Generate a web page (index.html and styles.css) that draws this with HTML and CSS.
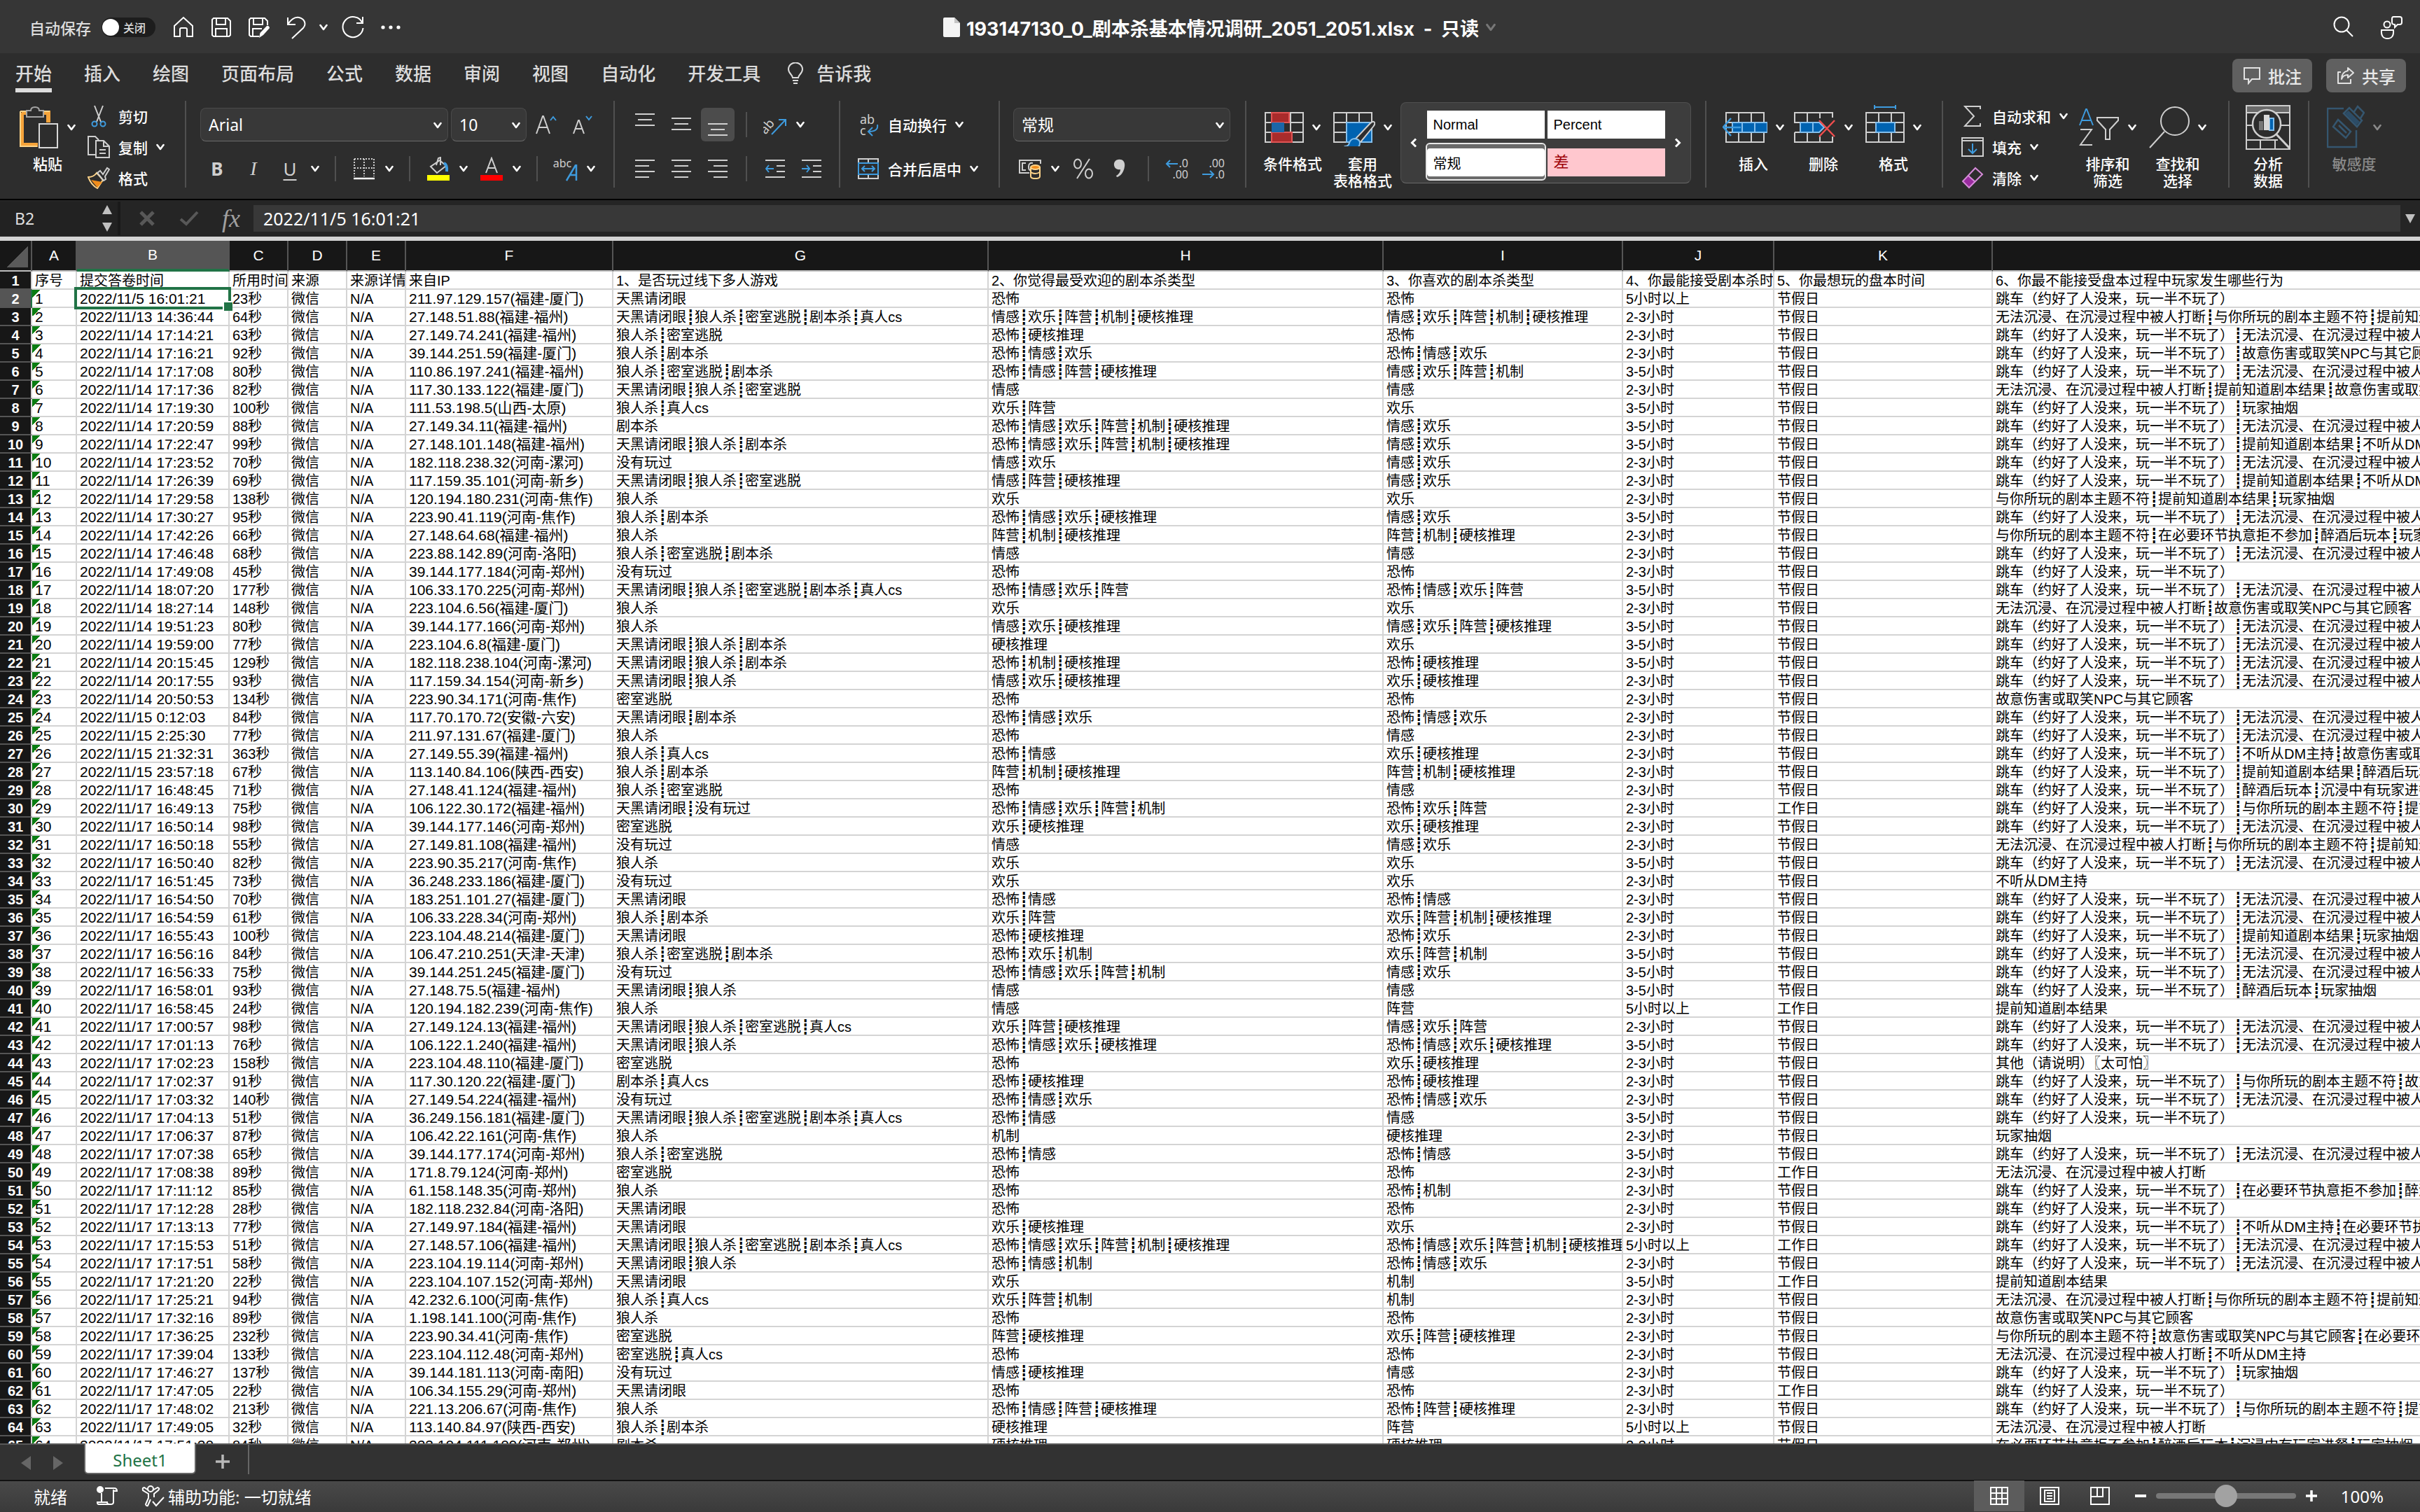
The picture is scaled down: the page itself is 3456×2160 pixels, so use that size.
FILE: index.html
```html
<!DOCTYPE html>
<html lang="zh-CN">
<head>
<meta charset="utf-8">
<title>193147130_0_剧本杀基本情况调研_2051_2051.xlsx</title>
<link rel="stylesheet" href="styles.css">
</head>
<body>
<svg class="sprite" aria-hidden="true">
  <symbol id="chev" viewBox="0 0 12 10"><path d="M1.5 2 6 8 10.500 2" fill="none" stroke="currentColor" stroke-width="2.6" stroke-linecap="round" stroke-linejoin="round"/></symbol>
  <symbol id="grid" viewBox="0 0 56 44"><path d="M1 1h54v42H1zM1 15h54M1 29h54M19 1v42M37 1v42" fill="none" stroke="#cfcfcf" stroke-width="2"/></symbol>
</svg>

<header class="titlebar">
  <div class="quick">
    <label class="autosave">自动保存 <span class="toggle"><input type="checkbox"><span>关闭</span></span></label>
    <button class="qb" aria-label="主页"><svg width="32" height="32" viewBox="0 0 32 32"><path d="M3 14 16 2l13 12v15h-8V19q0-2-2-2h-6q-2 0-2 2v10H3z" class="w"/></svg></button>
    <button class="qb" aria-label="保存"><svg width="32" height="32" viewBox="0 0 32 32"><path d="M5 3h20l4 4v20l-2 2H5l-2-2V5zM9 3v9h13V3M8 29V18h16v11" class="w"/></svg></button>
    <button class="qb" aria-label="另存为"><svg width="32" height="32" viewBox="0 0 32 32"><path d="M16 29H4l-2-2V5l2-2h20l4 4v6M8 3v9h13V3M7 29V18h13" class="w"/><path d="M16 31l1.500-7L27 14q3-1 4 3l-9 10z" fill="#fff"/></svg></button>
    <button class="qb" aria-label="撤销"><svg width="32" height="34" viewBox="0 0 32 34"><path d="M3 3v10h11M3 13C8 5 13 2 19 3c8 2 11 9 6 15L9 33" class="w"/></svg></button>
    <button class="qc" aria-label="撤销选项"><svg width="12" height="10"><use href="#chev"/></svg></button>
    <button class="qb" aria-label="重做"><svg width="34" height="34" viewBox="0 0 34 34"><path d="M31 2v9h-9M30 10A14.500 14.500 0 1 0 31.500 18" class="w"/></svg></button>
    <button class="qb" aria-label="更多"><svg width="28" height="8" viewBox="0 0 28 8"><circle cx="3" cy="4" r="2.600"/><circle cx="14" cy="4" r="2.600"/><circle cx="25" cy="4" r="2.600"/></svg></button>
  </div>
  <h1 class="doc"><svg width="24" height="28" viewBox="0 0 24 28"><path d="M2 0h14l8 8v18q0 2-2 2H2q-2 0-2-2V2q0-2 2-2z" fill="#f4f4f4"/><path d="M16 0v8h8z" fill="#c4c4c4"/></svg><span class="doc-name">193147130_0_剧本杀基本情况调研_2051_2051.xlsx&nbsp; - &nbsp;只读</span><svg class="dim" width="16" height="12"><use href="#chev"/></svg></h1>
  <div class="account">
    <button class="qb" aria-label="搜索"><svg width="32" height="32" viewBox="0 0 32 32"><circle cx="13" cy="12" r="10.500" class="w"/><path d="M20 20l9 9" class="w"/></svg></button>
    <button class="qb" aria-label="状态"><svg width="34" height="34" viewBox="0 0 34 34"><circle cx="11" cy="13" r="4.500" class="w"/><path d="M3 21h17q1 12-8.500 12T3 21zM20 2h9q3 0 3 3v5q0 3-3 3h-3l-4 4v-4q-4 0-4-3V5q0-3 2-3z" class="w"/></svg></button>
  </div>
</header>

<nav class="tabs">
  <a href="#home" class="tab current">开始</a><a href="#insert" class="tab">插入</a><a href="#draw" class="tab">绘图</a><a href="#layout" class="tab">页面布局</a><a href="#formulas" class="tab">公式</a><a href="#data" class="tab">数据</a><a href="#review" class="tab">审阅</a><a href="#view" class="tab">视图</a><a href="#automate" class="tab">自动化</a><a href="#developer" class="tab">开发工具</a>
  <a href="#tell" class="tell"><svg width="24" height="32" viewBox="0 0 24 32"><path d="M8 22c0-4-6-6-6-12a10 9.500 0 0 1 20 0c0 6-6 8-6 12zM8 26h8M9 30h6" fill="none" stroke="#dcdcdc" stroke-width="2"/></svg>告诉我</a>
  <div class="actions">
    <button class="pill"><svg width="26" height="26" viewBox="0 0 26 26"><path d="M2 2h22v16H13l-5 6v-6H2z" fill="none" stroke="#e2e2e2" stroke-width="2"/></svg>批注</button>
    <button class="pill"><svg width="26" height="26" viewBox="0 0 26 26"><path d="M6 8H2v16h18v-6M16 2l8 7-8 7v-4q-7 0-9 6 0-10 9-12z" fill="none" stroke="#e2e2e2" stroke-width="2" stroke-linejoin="round"/></svg>共享</button>
  </div>
</nav>

<section class="ribbon" id="home">
  <div class="group g-clip">
    <button class="big"><span class="pic"><svg width="56" height="60" viewBox="0 0 56 60"><path d="M3 9h38v14M26 55H3V9" fill="none" stroke="#f5a33a" stroke-width="6"/><path d="M1 7h42M1 7v50h24" fill="none" stroke="#ffd58a" stroke-width="2"/><path d="M10 6h6q0-5 6-5t6 5h6v9H10z" fill="#2d2d2d" stroke="#a5a5a5" stroke-width="2"/><path d="M28 25h26v34H28z" fill="#2d2d2d" stroke="#d8d8d8" stroke-width="2"/></svg><svg width="12" height="10"><use href="#chev"/></svg></span><span class="cap">粘贴</span></button>
    <div class="stack">
      <button class="line"><span class="ico"><svg width="24" height="32" viewBox="0 0 24 32"><path d="M6 1l9 23M18 1L9 24" class="g"/><circle cx="6" cy="27" r="3.500" class="b"/><circle cx="18" cy="27" r="3.500" class="b"/></svg></span>剪切</button>
      <button class="line"><span class="ico"><svg width="32" height="32" viewBox="0 0 32 32"><path d="M11 27H1V1h10l5 5M12 7h11l8 8v16H12zM23 7v8h8M17 20h9M17 25h9" class="g"/></svg></span>复制<svg width="12" height="10"><use href="#chev"/></svg></button>
      <button class="line"><span class="ico"><svg width="32" height="32" viewBox="0 0 32 32"><path d="M1 15q8 0 12-6l9 10-8 12q-9-5-13-16z" fill="#2d2d2d" stroke="#ffd58a" stroke-width="2"/><path d="M5 19l16 3-7 8z" fill="#f08c1a"/><path d="M14 9l4-3 4 5 6-9 3 2-6 10 1 4-3 2z" fill="#2d2d2d" stroke="#cfcfcf" stroke-width="2"/></svg></span>格式</button>
    </div>
  </div>

  <div class="group g-font rows">
    <div class="row">
      <span class="sel sel-font"><select aria-label="字体"><option>Arial</option></select><svg width="12" height="10"><use href="#chev"/></svg></span>
      <span class="sel sel-size"><select aria-label="字号"><option>10</option></select><svg width="12" height="10"><use href="#chev"/></svg></span>
      <button class="ib" aria-label="增大字号"><svg width="30" height="30" viewBox="0 0 30 30"><path d="M1 28 10 3h1l9 25M4 19h13" class="g"/><path d="M21 9l4-5 4 5" class="b"/></svg></button>
      <button class="ib" aria-label="减小字号"><svg width="30" height="30" viewBox="0 0 30 30"><path d="M2 28 9 9h1l7 19M4 21h11" class="g"/><path d="M20 3l4 5 4-5" class="b"/></svg></button>
    </div>
    <div class="row">
      <button class="ib t-b">B</button>
      <button class="ib t-i">I</button>
      <button class="split"><span class="ib t-u">U</span><svg width="12" height="10"><use href="#chev"/></svg></button>
      <i class="vs"></i>
      <button class="split" aria-label="边框"><span class="ib"><svg width="32" height="32" viewBox="0 0 32 32"><path d="M2 2h28M2 15h28M2 2v25M16 2v25M30 2v25" fill="none" stroke="#cfcfcf" stroke-width="2" stroke-dasharray="2 2"/><path d="M1 30h30" stroke="#fff" stroke-width="2.500"/></svg></span><svg width="12" height="10"><use href="#chev"/></svg></button>
      <i class="vs"></i>
      <button class="split" aria-label="填充颜色"><span class="ib"><svg width="32" height="34" viewBox="0 0 32 34"><path d="M18 5 5 14l9 9 13-10zM13 12l3-10 3-1v11" class="g"/><path d="M24 9q5 2 4 12" fill="none" stroke="#3e9bde" stroke-width="4"/><path d="M0 26h32v8H0z" fill="#ff0"/></svg></span><svg width="12" height="10"><use href="#chev"/></svg></button>
      <button class="split" aria-label="字体颜色"><span class="ib"><svg width="32" height="34" viewBox="0 0 32 34"><path d="M8 23 16 2l8 21M11 16h10" class="g"/><path d="M0 26h32v8H0z" fill="red"/></svg></span><svg width="12" height="10"><use href="#chev"/></svg></button>
      <i class="vs"></i>
      <button class="split" aria-label="拼音"><span class="ib abc"><span>abc</span><svg width="18" height="24" viewBox="0 0 18 24"><path d="M1 23 14 1h1v22M6 15h9" fill="none" stroke="#3e9bde" stroke-width="2.500"/></svg></span><svg width="12" height="10"><use href="#chev"/></svg></button>
    </div>
  </div>

  <div class="group g-align rows">
    <div class="row">
      <button class="ib" aria-label="顶端对齐"><svg width="28" height="32" viewBox="0 0 28 32"><path d="M0 1h28M4 9h20M0 17h28" class="g"/></svg></button>
      <button class="ib" aria-label="垂直居中"><svg width="28" height="32" viewBox="0 0 28 32"><path d="M0 7h28M4 15h20M0 23h28" class="g"/></svg></button>
      <button class="ib on" aria-label="底端对齐"><svg width="28" height="32" viewBox="0 0 28 32"><path d="M0 15h28M4 23h20M0 31h28" class="g"/></svg></button>
      <i class="vs"></i>
      <button class="split" aria-label="方向"><span class="ib"><svg width="34" height="34" viewBox="0 0 34 34"><text x="-4" y="24" transform="rotate(-50 8 20)" class="ab">ab</text><path d="M12 31 31 11M22 10h10v9" class="b"/></svg></span><svg width="12" height="10"><use href="#chev"/></svg></button>
    </div>
    <div class="row">
      <button class="ib" aria-label="左对齐"><svg width="28" height="28" viewBox="0 0 28 28"><path d="M0 2h28M0 10h20M0 18h28M0 26h20" class="g"/></svg></button>
      <button class="ib" aria-label="居中"><svg width="28" height="28" viewBox="0 0 28 28"><path d="M0 2h28M4 10h20M0 18h28M4 26h20" class="g"/></svg></button>
      <button class="ib" aria-label="右对齐"><svg width="28" height="28" viewBox="0 0 28 28"><path d="M0 2h28M8 10h20M0 18h28M8 26h20" class="g"/></svg></button>
      <i class="vs"></i>
      <button class="ib" aria-label="减少缩进"><svg width="28" height="28" viewBox="0 0 28 28"><path d="M0 2h28M16 10h12M16 18h12M0 26h28" class="g"/><path d="M12 14H1M5 9l-4 5 4 5" class="b"/></svg></button>
      <button class="ib" aria-label="增加缩进"><svg width="28" height="28" viewBox="0 0 28 28"><path d="M0 2h28M16 10h12M16 18h12M0 26h28" class="g"/><path d="M0 14h11M7 9l4 5-4 5" class="b"/></svg></button>
    </div>
  </div>

  <div class="group g-wrap rows">
    <div class="row"><button class="line"><span class="ico"><svg width="32" height="36" viewBox="0 0 32 36"><text x="4" y="17" class="ab">ab</text><text x="4" y="33" class="ab">c</text><path d="M29 18q2 10-13 10M22 22l-6 6 6 6" class="b"/></svg></span>自动换行<svg width="12" height="10"><use href="#chev"/></svg></button></div>
    <div class="row"><button class="line"><span class="ico"><svg width="30" height="30" viewBox="0 0 30 30"><path d="M1 1h28v28H1zM15 1v6M15 23v6" class="g"/><path d="M1 7h28v16H1zM6 15h18M10 11l-4 4 4 4M20 11l4 4-4 4" class="b"/></svg></span>合并后居中<svg width="12" height="10"><use href="#chev"/></svg></button></div>
  </div>

  <div class="group g-num rows">
    <div class="row"><span class="sel sel-num"><select aria-label="数字格式"><option>常规</option></select><svg width="12" height="10"><use href="#chev"/></svg></span></div>
    <div class="row">
      <button class="split" aria-label="货币"><span class="ib"><svg width="32" height="30" viewBox="0 0 32 30"><path d="M31 8V3H1v18h14" class="g"/><path d="M10 7H5v10h5M20 7q-6-1-6 5t3 5" class="g"/><path d="M17 13v13q0 3 6.500 3T30 26V13z" fill="#2d2d2d" stroke="#ffd58a" stroke-width="2"/><ellipse cx="23.500" cy="13" rx="6.500" ry="3" fill="#f08c1a" stroke="#ffd58a" stroke-width="2"/><path d="M17 20q6 4 13 0" fill="none" stroke="#ffd58a" stroke-width="2"/></svg></span><svg width="12" height="10"><use href="#chev"/></svg></button>
      <button class="ib" aria-label="百分比"><svg width="30" height="30" viewBox="0 0 30 30"><ellipse cx="7" cy="8" rx="5" ry="6.500" class="g"/><ellipse cx="23" cy="22" rx="5" ry="6.500" class="g"/><path d="M24 1 6 29" class="g"/></svg></button>
      <button class="ib" aria-label="千位分隔"><svg width="18" height="28" viewBox="0 0 18 28"><path d="M7 1c7-1 10 4 9 10-1 8-6 14-11 15l-1-2c4-2 6-6 6-9C-1 17-2 2 7 1z" fill="#cfcfcf"/></svg></button>
      <i class="vs"></i>
      <button class="ib" aria-label="增加小数位"><svg width="34" height="34" viewBox="0 0 34 34"><text x="33" y="15" class="num">.0</text><text x="33" y="31" class="num">.00</text><path d="M18 10H2M7 5l-5 5 5 5" class="b"/></svg></button>
      <button class="ib" aria-label="减少小数位"><svg width="34" height="34" viewBox="0 0 34 34"><text x="33" y="15" class="num">.00</text><text x="33" y="31" class="num">.0</text><path d="M1 25h16M12 20l5 5-5 5" class="b"/></svg></button>
    </div>
  </div>

  <div class="group g-style">
    <button class="big"><span class="pic"><svg width="56" height="44" viewBox="0 0 56 44"><use href="#grid"/><path d="M10 1h25v14H10zM10 29h29v14H10z" fill="#a92b2b" stroke="#e05555" stroke-width="2"/><path d="M10 15h18v14H10z" fill="#1b66a8"/></svg><svg width="12" height="10"><use href="#chev"/></svg></span><span class="cap">条件格式</span></button>
    <button class="big"><span class="pic"><svg width="60" height="54" viewBox="0 -5 60 54"><use href="#grid" width="56" height="44"/><path d="M19 15h36v28H19z" fill="#0063b1" stroke="#83beec" stroke-width="2"/><path d="M58 14q3 2-1 7L39 43l-7-5 20-21q4-4 6-3z" fill="#2d2d2d" stroke="#cfcfcf" stroke-width="2"/><path d="M31 38q7 1 7 6 0 9-12 9-7 0-9-4 5 0 6-5 2-6 8-6z" fill="#0063b1" stroke="#83beec" stroke-width="2"/></svg><svg width="12" height="10"><use href="#chev"/></svg></span><span class="cap">套用<br>表格格式</span></button>
    <div class="gallery">
      <button class="ga" aria-label="上一个"><svg width="10" height="14" viewBox="0 0 10 14"><path d="M8 1.500 2.500 7 8 12.500" class="gw"/></svg></button>
      <div class="styles">
        <button class="st">Normal</button><button class="st">Percent</button>
        <button class="st song picked">常规</button><button class="st song bad">差</button>
      </div>
      <button class="ga" aria-label="下一个"><svg width="10" height="14" viewBox="0 0 10 14"><path d="M2 1.500 7.500 7 2 12.500" class="gw"/></svg></button>
    </div>
  </div>

  <div class="group g-cells">
    <button class="big"><span class="pic"><svg width="64" height="44" viewBox="-4 0 64 44"><use href="#grid" width="56" height="44"/><path d="M10 15h50v14H10z" fill="#0063b1" stroke="#83beec" stroke-width="2"/><path d="M24 15v14M42 15v14" stroke="#83beec" stroke-width="2"/><path d="M22 22H-2M8 9-3 21.500 8 34" fill="none" stroke="#3e9bde" stroke-width="2.500"/></svg><svg width="12" height="10"><use href="#chev"/></svg></span><span class="cap">插入</span></button>
    <button class="big"><span class="pic"><svg width="60" height="44" viewBox="0 0 60 44"><path d="M55 8V1H1v14h10M1 29v14h54v-8M1 29h10M19 1v42M37 1v8M37 35v8" class="g"/><path d="M9 15h27l7 7-7 7H9z" fill="#0063b1" stroke="#83beec" stroke-width="2"/><path d="M27 15v14" stroke="#83beec" stroke-width="2"/><path d="M36 12l22 23M58 12 36 35" fill="none" stroke="#f04e4e" stroke-width="2.500"/></svg><svg width="12" height="10"><use href="#chev"/></svg></span><span class="cap">删除</span></button>
    <button class="big"><span class="pic"><svg width="56" height="64" viewBox="0 -10 56 64"><use href="#grid" width="56" height="44"/><path d="M15 15h27v14H15z" fill="#0063b1" stroke="#83beec" stroke-width="2"/><path d="M13-10v6M43-10v6M13-7h30" class="b"/></svg><svg width="12" height="10"><use href="#chev"/></svg></span><span class="cap">格式</span></button>
  </div>

  <div class="group g-edit">
    <div class="stack">
      <button class="line"><span class="ico"><svg width="26" height="30" viewBox="0 0 26 30"><path d="M24 5V1H2l13 14L2 29h22v-4" class="g"/></svg></span>自动求和<svg width="12" height="10"><use href="#chev"/></svg></button>
      <button class="line"><span class="ico"><svg width="32" height="28" viewBox="0 0 32 28"><path d="M1 1h30v26H1zM1 5h30" class="g"/><path d="M16 9v14M10 17l6 6 6-6" class="b"/></svg></span>填充<svg width="12" height="10"><use href="#chev"/></svg></button>
      <button class="line"><span class="ico"><svg width="32" height="32" viewBox="0 0 32 32"><path d="M2 21l9-8 9 9-8 8z" fill="#9a2ba0"/><path d="M2 21 20 2l10 9-19 19z" fill="none" stroke="#d68ad9" stroke-width="2"/><path d="M10 13l10 9" stroke="#d68ad9" stroke-width="2"/></svg></span>清除<svg width="12" height="10"><use href="#chev"/></svg></button>
    </div>
    <button class="big"><span class="pic"><svg width="58" height="54" viewBox="0 0 58 54"><path d="M1 24 10 1h1l9 23M4 17h13" class="b"/><path d="M2 30h16L2 52h17" class="g"/><path d="M26 13h30v4L44 30v14h-6V30L26 17z" class="g"/></svg><svg width="12" height="10"><use href="#chev"/></svg></span><span class="cap">排序和<br>筛选</span></button>
    <button class="big"><span class="pic"><svg width="58" height="60" viewBox="0 0 58 60"><circle cx="37" cy="21" r="20" class="g"/><path d="M22 36 1 59" class="g"/></svg><svg width="12" height="10"><use href="#chev"/></svg></span><span class="cap">查找和<br>选择</span></button>
  </div>

  <div class="group g-analyze">
    <button class="big"><span class="pic"><svg width="64" height="64" viewBox="0 0 64 64"><path d="M1 1h62v62H1z" class="g"/><path d="M2 2h60v8H2z" fill="#6a6a6a"/><path d="M1 11h62M1 29h10M50 29h13M1 50h45M21 50v13M42 50v13" class="g"/><circle cx="30" cy="27" r="20" fill="#2d2d2d" stroke="#cfcfcf" stroke-width="2.500"/><path d="M44 42l19 20" stroke="#cfcfcf" stroke-width="3"/><path d="M19 23h6v13h-6z" fill="#777"/><path d="M34 19h6v17h-6z" fill="#0063b1" stroke="#83beec" stroke-width="2"/><path d="M26 14h8v22h-8z" fill="#d8d8d8"/></svg></span><span class="cap">分析<br>数据</span></button>
  </div>

  <div class="group g-sens">
    <button class="big faded" disabled><span class="pic"><svg width="54" height="64" viewBox="0 0 54 64"><path d="M24 5H1v55h41V36" fill="none" stroke="#35566f" stroke-width="2.500"/><path d="M16 21 34 38l-7 9L9 31zM17 29l11 11M24 12l8-8 18 18-7 9zM38 11l6-9 9 9-5 8" fill="none" stroke="#35566f" stroke-width="2.500"/><path d="M26 12l5-4 16 16-5 5z" fill="#2c4c66"/></svg><svg width="12" height="10"><use href="#chev"/></svg></span><span class="cap">敏感度</span></button>
  </div>
</section>

<section class="formula">
  <div class="namebox"><input type="text" aria-label="名称框" value="B2"><svg width="14" height="38" viewBox="0 0 14 38"><path d="M7 0l7 13H0zM7 38l7-13H0z" fill="#c0c0c0"/></svg></div>
  <div class="fbs">
    <button class="fb" aria-label="取消"><svg width="22" height="22" viewBox="0 0 22 22"><path d="M2 2l18 18M20 2 2 20" stroke="#585858" stroke-width="5"/></svg></button>
    <button class="fb" aria-label="输入"><svg width="28" height="22" viewBox="0 0 28 22"><path d="M2 12l8 7L26 2" fill="none" stroke="#585858" stroke-width="4"/></svg></button>
    <button class="fb fx">fx</button>
  </div>
  <input class="fin" type="text" aria-label="编辑栏" value="2022/11/5 16:01:21">
  <button class="fdrop" aria-label="展开编辑栏"><svg width="14" height="13" viewBox="0 0 14 13"><path d="M0 0h14L7 13z" fill="#c0c0c0"/></svg></button>
</section>

<main class="sheet">
  <table class="cells">
    <colgroup><col class="c-n"><col class="c-a"><col class="c-b"><col class="c-s"><col class="c-s"><col class="c-s"><col class="c-f"><col class="c-g"><col class="c-h"><col class="c-i"><col class="c-j"><col class="c-k"><col></colgroup>
    <thead>
      <tr><th class="corner" aria-label="全选"></th><th>A</th><th class="hot">B</th><th>C</th><th>D</th><th>E</th><th>F</th><th>G</th><th>H</th><th>I</th><th>J</th><th>K</th><th></th></tr>
    </thead>
    <tbody id="rows">
      <tr><th>1</th><td>序号</td><td>提交答卷时间</td><td>所用时间</td><td>来源</td><td>来源详情</td><td>来自IP</td><td>1、是否玩过线下多人游戏</td><td>2、你觉得最受欢迎的剧本杀类型</td><td>3、你喜欢的剧本杀类型</td><td>4、你最能接受剧本杀时长</td><td>5、你最想玩的盘本时间</td><td>6、你最不能接受盘本过程中玩家发生哪些行为</td></tr>
    </tbody>
  </table>
</main>

<footer class="bottom">
  <div class="sheets">
    <button class="sa" aria-label="上一张"><svg width="14" height="20" viewBox="0 0 14 20"><path d="M14 0v20L0 10z" fill="#666"/></svg></button>
    <button class="sa" aria-label="下一张"><svg width="14" height="20" viewBox="0 0 14 20"><path d="M0 0v20l14-10z" fill="#666"/></svg></button>
    <button class="sheet-tab">Sheet1</button>
    <button class="add" aria-label="新建工作表"><svg width="20" height="20" viewBox="0 0 20 20"><path d="M10 0v20M0 10h20" stroke="#b8b8b8" stroke-width="3.500"/></svg></button>
  </div>
  <div class="status">
    <span>就绪</span>
    <svg class="rec" width="30" height="28" viewBox="0 0 30 28"><circle cx="5" cy="5" r="5"/><path d="M7 10v13M12 3h13q4 0 4 4h-5M24 5v18q0 3-4 3H3q-2 0-2-3h14q0 3 4 3" class="w"/></svg>
    <button class="a11y"><svg width="34" height="32" viewBox="0 0 34 32"><circle cx="13" cy="6" r="4" class="w"/><path d="M10 8 4 4Q1 4 2 8l8 5v6L6 28q1 3 3 2l4-9M16 8l7-4q4 1 1 4l-6 5v5M16 24l5 6L32 18" class="w"/></svg>辅助功能: 一切就绪</button>
    <div class="views">
      <button class="vb on" aria-label="普通"><svg width="26" height="26" viewBox="0 0 26 26"><path d="M1 1h24v24H1zM1 9h24M1 17h24M9 1v24M17 1v24" class="w"/></svg></button>
      <button class="vb" aria-label="页面布局"><svg width="28" height="26" viewBox="0 0 28 26"><path d="M1 1h26v24H1zM7 5h14v16H7zM10 9h8M10 13h8M10 17h8" class="w"/></svg></button>
      <button class="vb" aria-label="分页预览"><svg width="28" height="26" viewBox="0 0 28 26"><path d="M1 1h26v24H1zM1 14h17V1M10 1v13" class="w"/></svg></button>
      <button class="zb" aria-label="缩小"><svg width="16" height="16" viewBox="0 0 16 16"><path d="M0 8h16" stroke="#fff" stroke-width="4"/></svg></button>
      <input class="zoom" type="range" min="0" max="100" value="50" aria-label="缩放">
      <button class="zb" aria-label="放大"><svg width="16" height="16" viewBox="0 0 16 16"><path d="M0 8h16M8 0v16" stroke="#fff" stroke-width="3.500"/></svg></button>
      <span class="pct">100%</span>
    </div>
  </div>
</footer>
<script src="rows.js"></script>
</body>
</html>
```
FILE: rows.js
```js
// Answer options of the survey; each response stores the indexes that were ticked.
const GAMES = ['天黑请闭眼', '狼人杀', '密室逃脱', '剧本杀', '真人cs', '没有玩过'];
const TYPES = ['恐怖', '情感', '欢乐', '阵营', '机制', '硬核推理'];
const HOURS = ['2-3小时', '3-5小时', '5小时以上'];
const DAYS = ['节假日', '工作日'];
const TABOOS = ['跳车（约好了人没来，玩一半不玩了）', '无法沉浸、在沉浸过程中被人打断', '与你所玩的剧本主题不符', '提前知道剧本结果', '不听从DM主持', '故意伤害或取笑NPC与其它顾客', '在必要环节执意拒不参加', '醉酒后玩本', '沉浸中有玩家进餐', '玩家抽烟'];
const OTHER = '其他（请说明）<span class="half">〖</span>太可怕<span class="half">〗</span>';

// time | seconds | IP | games | popular | liked | hours | day | taboos
const DATA = `
5 16:01:21|23|211.97.129.157(福建-厦门)|0|0|0|2|0|0
13 14:36:44|64|27.148.51.88(福建-福州)|01234|12345|12345|0|0|123
14 17:14:21|63|27.149.74.241(福建-福州)|12|05|0|0|0|01
14 17:16:21|92|39.144.251.59(福建-厦门)|13|012|012|0|0|05
14 17:17:08|80|110.86.197.241(福建-福州)|123|0135|1234|1|0|01
14 17:17:36|82|117.30.133.122(福建-厦门)|012|1|1|0|0|135
14 17:19:30|100|111.53.198.5(山西-太原)|14|23|2|1|0|09
14 17:20:59|88|27.149.34.11(福建-福州)|3|012345|12|1|0|01
14 17:22:47|99|27.148.101.148(福建-福州)|013|012345|12|1|0|034
14 17:23:52|70|182.118.238.32(河南-漯河)|5|12|12|0|0|01
14 17:26:39|69|117.159.35.101(河南-新乡)|012|135|12|0|0|034
14 17:29:58|138|120.194.180.231(河南-焦作)|1|2|2|0|0|239
14 17:30:27|95|223.90.41.119(河南-焦作)|13|0125|12|1|0|01
14 17:42:26|66|27.148.64.68(福建-福州)|1|345|345|0|0|2679
14 17:46:48|68|223.88.142.89(河南-洛阳)|123|1|1|0|0|01
14 17:49:08|45|39.144.177.184(河南-郑州)|5|0|0|0|0|0
14 18:07:20|177|106.33.170.225(河南-郑州)|01234|0123|0123|1|0|01
14 18:27:14|148|223.104.6.56(福建-厦门)|1|2|2|0|0|15
14 19:51:23|80|39.144.177.166(河南-郑州)|1|125|1235|1|0|01
14 19:59:00|77|223.104.6.8(福建-厦门)|013|5|2|1|0|01
14 20:15:45|129|182.118.238.104(河南-漯河)|013|045|05|1|0|01
14 20:17:55|93|117.159.34.154(河南-新乡)|01|125|25|0|0|01
14 20:50:53|134|223.90.34.171(河南-焦作)|2|0|0|0|0|5
15 0:12:03|84|117.70.170.72(安徽-六安)|03|012|012|0|0|01
15 2:25:30|77|211.97.131.67(福建-厦门)|1|0|1|0|0|01
15 21:32:31|363|27.149.55.39(福建-福州)|14|01|25|0|0|045
15 23:57:18|67|113.140.84.106(陕西-西安)|13|345|345|0|0|037
17 16:48:45|71|27.148.41.124(福建-福州)|12|0|1|0|0|078
17 16:49:13|75|106.122.30.172(福建-福州)|05|01234|023|0|1|023
17 16:50:14|98|39.144.177.146(河南-郑州)|2|25|25|0|0|01
17 16:50:18|55|27.149.81.108(福建-福州)|5|1|12|0|0|123
17 16:50:40|82|223.90.35.217(河南-焦作)|1|2|2|1|0|01
17 16:51:45|73|36.248.233.186(福建-厦门)|5|2|2|0|0|4
17 16:54:50|70|183.251.101.27(福建-厦门)|0|01|01|0|0|01
17 16:54:59|61|106.33.228.34(河南-郑州)|13|23|2345|0|0|01
17 16:55:43|100|223.104.48.214(福建-厦门)|0|05|02|0|0|039
17 16:56:16|84|106.47.210.251(天津-天津)|123|024|234|1|0|01
17 16:56:33|75|39.144.251.245(福建-厦门)|5|01234|12|1|0|01
17 16:58:01|93|27.148.75.5(福建-福州)|01|1|1|1|0|079
17 16:58:45|24|120.194.182.239(河南-焦作)|1|1|3|2|1|3
17 17:00:57|98|27.149.124.13(福建-福州)|0124|235|123|0|0|01
17 17:01:13|76|106.122.1.240(福建-福州)|01|0125|0125|1|0|01
17 17:02:23|158|223.104.48.110(福建-厦门)|2|0|25|0|0|x
17 17:02:37|91|117.30.120.22(福建-厦门)|34|05|05|0|0|025
17 17:03:32|140|27.149.54.224(福建-福州)|5|012|012|0|0|01
17 17:04:13|51|36.249.156.181(福建-厦门)|01234|01|1|1|0|0
17 17:06:37|87|106.42.22.161(河南-焦作)|1|4|5|0|0|9
17 17:07:38|65|39.144.177.174(河南-郑州)|12|01|01|1|0|01
17 17:08:38|89|171.8.79.124(河南-郑州)|2|0|0|0|1|1
17 17:11:12|85|61.158.148.35(河南-郑州)|1|0|04|0|0|067
17 17:12:28|28|182.118.232.84(河南-洛阳)|0|0|0|0|0|0
17 17:13:13|77|27.149.97.184(福建-福州)|0|25|2|0|0|046
17 17:15:53|51|27.148.57.106(福建-福州)|01234|012345|012345|2|1|01
17 17:17:51|58|223.104.19.114(河南-郑州)|01|014|012|0|0|01
17 17:21:20|22|223.104.107.152(河南-郑州)|0|2|4|1|1|3
17 17:25:21|94|42.232.6.100(河南-焦作)|14|234|4|0|0|123
17 17:32:16|89|1.198.141.100(河南-焦作)|1|0|0|0|0|5
17 17:36:25|232|223.90.34.41(河南-焦作)|2|35|235|0|0|256
17 17:39:04|133|223.104.112.48(河南-郑州)|24|0|0|0|0|14
17 17:46:27|137|39.144.181.113(河南-南阳)|5|15|1|0|0|09
17 17:47:05|22|106.34.155.29(河南-郑州)|0|0|0|0|1|0
17 17:48:02|213|221.13.206.67(河南-焦作)|1|0135|035|0|0|023
17 17:49:05|32|113.140.84.97(陕西-西安)|13|5|3|2|0|1
17 17:51:20|84|223.104.111.109(河南-郑州)|3|5|5|0|0|6789
`;

const pick = (list, ticks) => [...ticks].map(i => list[i]).join('┋');
const html = DATA.trim().split('\n').map((line, i) => {
  const [time, sec, ip, games, popular, liked, hours, day, taboos] = line.split('|');
  const first = i === 0;
  return `<tr><th${first ? ' class="hot"' : ''}>${i + 2}</th><td class="flag">${i + 1}</td>` +
    `<td class="latin${first ? ' active' : ''}">2022/11/${time}</td><td>${sec}秒</td><td>微信</td><td>N/A</td>` +
    `<td class="latin">${ip}</td><td>${pick(GAMES, games)}</td><td>${pick(TYPES, popular)}</td><td>${pick(TYPES, liked)}</td>` +
    `<td>${HOURS[hours]}</td><td>${DAYS[day]}</td><td>${taboos === 'x' ? OTHER : pick(TABOOS, taboos)}</td></tr>`;
}).join('');
document.getElementById('rows').insertAdjacentHTML('beforeend', html);
```
FILE: styles.css
```css
* { box-sizing: border-box; }
html, body { height: 100%; }
body {
  margin: 0;
  display: flex;
  flex-direction: column;
  overflow: hidden;
  background: #2d2d2d;
  color: #fff;
  font-family: "Noto Sans", "Noto Sans CJK SC", sans-serif;
  font-size: 21px;
}
button, input, select { font: inherit; color: inherit; border: 0; margin: 0; padding: 0; background: none; outline: 0; }
button { display: flex; align-items: center; justify-content: center; flex: none; white-space: nowrap; }
a { color: inherit; text-decoration: none; }
svg { display: block; flex: none; fill: #fff; }
.sprite { position: absolute; width: 0; height: 0; }
.w { fill: none; stroke: #fff; stroke-width: 2; }
.g { fill: none; stroke: #cfcfcf; stroke-width: 2; }
.b { fill: none; stroke: #3e9bde; stroke-width: 2; }
.gw { fill: none; stroke: #fff; stroke-width: 3; }

/* title bar */
.titlebar { flex: none; height: 76px; padding: 2px 14px 0 42px; display: grid; grid-template-columns: 1fr auto 1fr; align-items: center; background: #363636; }
.quick, .account { display: flex; align-items: center; }
.account { justify-content: flex-end; gap: 14px; }
.autosave { display: flex; align-items: center; gap: 15px; margin-right: 13px; font-size: 22px; font-weight: 500; color: #ddd; }
.toggle { display: flex; align-items: center; gap: 6px; width: 77px; height: 28px; padding-left: 1px; border-radius: 14px; background: #1d1d1d; font-size: 16px; }
.toggle input { appearance: none; width: 24px; height: 24px; border-radius: 12px; background: #fff; }
.qb { width: 54px; height: 40px; }
.qc { width: 22px; height: 40px; margin-right: 4px; }
.doc { display: flex; align-items: center; gap: 9px; margin: 0; font-size: 27px; font-weight: 700; }
.doc-name { font-family: Inter, "Noto Sans CJK SC", sans-serif; white-space: nowrap; }
.dim { color: #777; }

/* tabs */
.tabs { flex: none; height: 68px; padding: 8px 20px 0 22px; display: flex; align-items: flex-start; gap: 46px; font-size: 26px; font-weight: 500; color: #dcdcdc; }
.tab { line-height: 42px; border-bottom: 6px solid transparent; white-space: nowrap; }
.tab.current { border-image: linear-gradient(#dcdcdc, #dcdcdc) 1; }
.tell { display: flex; align-items: center; gap: 18px; margin-left: -8px; line-height: 42px; white-space: nowrap; }
.actions { display: flex; gap: 20px; margin-left: auto; }
.pill { width: 114px; height: 48px; gap: 10px; border-radius: 8px; background: #606060; font-size: 24px; font-weight: 500; color: #e8e8e8; }

/* ribbon */
.ribbon { flex: none; display: flex; height: 142px; padding-bottom: 16px; border-bottom: 2px solid #000; }
.group { flex: none; display: flex; align-items: flex-start; border-right: 2px solid #505050; }
.rows { flex-direction: column; gap: 15px; padding-top: 10px; }
.row { display: flex; align-items: center; gap: 4px; height: 48px; }
.g-clip { width: 266px; padding-left: 18px; gap: 7px; }
.g-font { width: 612px; padding-left: 20px; }
.g-align { width: 322px; padding-left: 19px; }
.g-wrap { width: 228px; padding-left: 24px; }
.g-num { width: 352px; padding-left: 19px; }
.g-style { width: 657px; padding-left: 16px; }
.g-cells { width: 338px; padding-left: 17px; }
.g-edit { width: 409px; padding-left: 26px; }
.g-edit .stack { width: 159px; }
.g-analyze { width: 114px; padding-left: 5px; }
.g-sens { padding-left: 14px; border-right: 0; }

.big { width: 100px; flex-direction: column; justify-content: flex-start; }
.pic { display: flex; align-items: center; gap: 12px; height: 76px; }
.cap { margin-top: 2px; line-height: 24px; font-weight: 500; text-align: center; }
.faded { color: #8a8a8a; }
.stack { display: flex; flex-direction: column; align-items: flex-start; gap: 16px; padding-top: 8px; }
.line { height: 28px; gap: 12px; font-weight: 500; }
.ico { width: 32px; display: flex; justify-content: center; }

.sel { position: relative; height: 48px; border: 1px solid #4a4a4a; border-bottom-color: #6a6a6a; border-radius: 8px; background: #383838; font-size: 23px; }
.sel select { width: 100%; height: 46px; padding-left: 11px; appearance: none; }
.sel svg { position: absolute; right: 8px; top: 19px; pointer-events: none; }
.sel-font { width: 354px; }
.sel-size { width: 108px; }
.sel-num { width: 310px; }

.ib { display: flex; align-items: center; justify-content: center; width: 48px; height: 48px; border-radius: 6px; }
.on { background: #4c4c4c; }
.split { width: 72px; justify-content: flex-start; gap: 6px; }
.vs { width: 2px; height: 36px; margin: 0 12px; background: #505050; }
.t-b, .t-i, .t-u { font-size: 26px; color: #cfcfcf; }
.t-b { font-weight: 700; }
.t-i { font-family: "Liberation Serif", serif; font-size: 28px; font-style: italic; }
.t-u { text-decoration: underline; text-underline-offset: 5px; text-decoration-thickness: 2px; }
.abc { align-items: flex-start; font-size: 16px; line-height: 24px; color: #cfcfcf; padding-top: 4px; }
.abc svg { margin: 14px 0 0 -8px; }
.ab { font: 18px "Noto Sans", sans-serif; fill: #cfcfcf; }
.num { font: 16px "Noto Sans", sans-serif; fill: #cfcfcf; text-anchor: end; }

.gallery { display: flex; width: 415px; height: 116px; margin: 2px 0 0 4px; border: 1px solid #505050; border-bottom-color: #6a6a6a; border-radius: 8px; background: #3d3d3d; }
.ga { flex: 1; }
.styles { display: grid; grid-template-columns: 168px 168px; grid-auto-rows: 40px; gap: 14px 4px; padding-top: 11px; }
.st { justify-content: flex-start; padding-left: 9px; background: #fff; color: #000; font: 20px "Liberation Sans", "Noto Sans CJK SC", sans-serif; }
.st.song { font-family: "Liberation Serif", "Noto Sans CJK SC", serif; }
.picked { position: relative; }
.picked::before { content: ""; position: absolute; inset: -8px -2px -6px; border: 2px solid #e8e8e8; border-radius: 6px; box-shadow: inset 0 6px #6a6a6a, inset 0 -4px #6a6a6a; }
.st.bad { background: #ffc7ce; color: #9c0006; font-size: 22px; padding-bottom: 6px; }

/* formula bar */
.formula { flex: none; display: flex; align-items: center; height: 58px; border-bottom: 6px solid #d4d4d4; background: #252525; }
.namebox { display: flex; align-items: center; width: 172px; height: 48px; padding: 0 8px 0 21px; border-right: 4px solid #1a1a1a; background: #222; font-size: 23px; }
.namebox input { flex: 1; min-width: 0; color: #ddd; }
.fbs { display: flex; padding: 0 2px 0 8px; }
.fb { width: 60px; height: 48px; }
.fx { font: italic 36px "Liberation Serif", serif; color: #a0a0a0; }
.fin { flex: 1; height: 38px; padding-left: 14px; background: #383838; font-size: 25px; }
.fdrop { width: 28px; }

/* worksheet */
.sheet { flex: 1; min-height: 0; overflow: hidden; background: #fff; color: #000; font-family: "Liberation Sans", "DejaVu Sans Mono", "Noto Sans CJK SC", sans-serif; font-size: 20px; }
.cells { width: 100%; table-layout: fixed; border-collapse: separate; border-spacing: 0; }
.c-n { width: 46px; }
.c-a { width: 64px; }
.c-b { width: 218px; }
.c-s { width: 84px; }
.c-f { width: 296px; }
.c-g { width: 536px; }
.c-h { width: 564px; }
.c-i { width: 342px; }
.c-j { width: 216px; }
.c-k { width: 312px; }
.cells td, .cells tbody th { height: 26px; line-height: 22px; padding: 2px 0 0 4px; border: 0 solid #d4d4d4; border-width: 0 2px 2px 0; white-space: nowrap; overflow: hidden; text-align: left; font-weight: 400; }
.cells tbody th { padding: 2px 0 0; background: #171717; color: #fff; font-weight: 700; text-align: center; border-bottom-color: #555; }
.cells thead th { height: 44px; padding: 0; background: #171717; color: #fff; font-size: 21px; font-weight: 400; border: 0 solid #555; border-width: 0 2px 2px 0; border-bottom-color: #bdbdbd; }
.cells tr > :last-child { border-right-width: 0; }
.cells thead .hot { background: #555; border-bottom: 4px solid #217346; border-right-color: #555; }
.cells tbody .hot { background: #555; border-right-color: #217346; }
.cells .corner { background: linear-gradient(135deg, transparent 50%, #5a5a5a 50%) 10px 8px / 30px 30px no-repeat #171717; }
.cells .latin, .cells .flag { font-size: 21px; }
.flag { background: linear-gradient(135deg, #0a7d12 50%, transparent 50%) 0 0 / 12px 12px no-repeat; }
.cells .active { position: relative; overflow: visible; }
.active::before { content: ""; position: absolute; inset: -4px; border: 4px solid #217346; }
.active::after { content: ""; position: absolute; right: -6px; bottom: -6px; width: 12px; height: 12px; border: 2px solid #fff; border-width: 2px 0 0 2px; background: #217346; }
.half { font-feature-settings: "halt"; }

/* sheet tabs and status bar */
.bottom { flex: none; }
.sheets { display: flex; align-items: flex-start; height: 52px; padding-left: 14px; border-top: 2px solid #585858; background: #323232; }
.sa { width: 46px; height: 52px; }
.sheet-tab { width: 160px; height: 44px; margin: -2px 0 0 14px; padding-top: 4px; border: 2px solid #666; border-top: 0; border-radius: 0 0 6px 6px; background: #fff; color: #217346; font-size: 24px; }
.add { width: 76px; height: 42px; padding: 6px 0 0 1px; border-right: 2px solid #666; }
.status { display: flex; align-items: center; height: 46px; padding: 0 0 2px 48px; border-top: 2px solid #111; background: linear-gradient(#494949, #3a3a3a); font-size: 24px; }
.rec { margin: 0 34px 0 42px; }
.a11y { gap: 4px; }
.views { display: flex; align-items: center; height: 44px; margin-left: auto; padding-right: 52px; }
.vb { width: 72px; height: 44px; }
.vb.on { border-radius: 0; background: #5c5c5c; }
.zb { width: 44px; }
.zoom { appearance: none; width: 200px; height: 32px; }
.zoom::-webkit-slider-runnable-track { height: 8px; border-radius: 4px; background: #777; }
.zoom::-webkit-slider-thumb { appearance: none; width: 32px; height: 32px; margin-top: -12px; border-radius: 16px; background: #a2a2a2; }
.pct { margin-left: 20px; }
```
